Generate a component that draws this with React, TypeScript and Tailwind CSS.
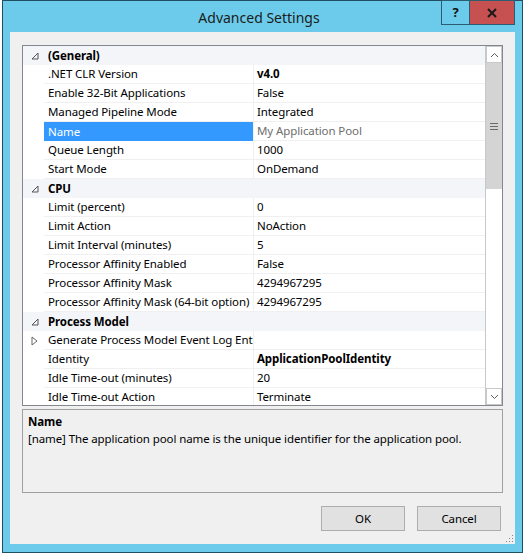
import React from "react";

type Row =
  | { kind: "cat"; label: string }
  | { kind: "prop"; label: string; value: string; bold?: boolean; selected?: boolean; expandable?: boolean };

const rows: Row[] = [
  { kind: "cat", label: "(General)" },
  { kind: "prop", label: ".NET CLR Version", value: "v4.0", bold: true },
  { kind: "prop", label: "Enable 32-Bit Applications", value: "False" },
  { kind: "prop", label: "Managed Pipeline Mode", value: "Integrated" },
  { kind: "prop", label: "Name", value: "My Application Pool", selected: true },
  { kind: "prop", label: "Queue Length", value: "1000" },
  { kind: "prop", label: "Start Mode", value: "OnDemand" },
  { kind: "cat", label: "CPU" },
  { kind: "prop", label: "Limit (percent)", value: "0" },
  { kind: "prop", label: "Limit Action", value: "NoAction" },
  { kind: "prop", label: "Limit Interval (minutes)", value: "5" },
  { kind: "prop", label: "Processor Affinity Enabled", value: "False" },
  { kind: "prop", label: "Processor Affinity Mask", value: "4294967295" },
  { kind: "prop", label: "Processor Affinity Mask (64-bit option)", value: "4294967295" },
  { kind: "cat", label: "Process Model" },
  { kind: "prop", label: "Generate Process Model Event Log Entry", value: "", expandable: true },
  { kind: "prop", label: "Identity", value: "ApplicationPoolIdentity", bold: true },
  { kind: "prop", label: "Idle Time-out (minutes)", value: "20" },
  { kind: "prop", label: "Idle Time-out Action", value: "Terminate" },
  { kind: "prop", label: "Load User Profile", value: "True" },
];

const ExpandedGlyph = () => (
  <svg width="8" height="8" viewBox="0 0 8 8">
    <path d="M7 1 L7 7 L1 7 Z" fill="none" stroke="#555" strokeWidth="1" />
  </svg>
);

const CollapsedGlyph = () => (
  <svg width="7" height="10" viewBox="0 0 7 10">
    <path d="M1 1 L6 5 L1 9 Z" fill="none" stroke="#666" strokeWidth="1" />
  </svg>
);

function GridRow({ row }: { row: Row }) {
  if (row.kind === "cat") {
    return (
      <div className="flex h-[19px] items-center bg-[#f4f5f8]">
        <div className="flex w-[21px] shrink-0 justify-center pl-[2px]">
          <ExpandedGlyph />
        </div>
        <div className="pl-[4px] font-bold">{row.label}</div>
      </div>
    );
  }
  return (
    <div className="flex h-[19px] items-stretch">
      <div className="flex w-[21px] shrink-0 items-center justify-center pl-[2px]">
        {row.expandable ? <CollapsedGlyph /> : null}
      </div>
      <div
        className={
          row.selected
            ? "flex w-[209px] shrink-0 items-center overflow-hidden whitespace-nowrap bg-[#3399ff] pl-[4px] text-white"
            : "flex w-[209px] shrink-0 items-center overflow-hidden whitespace-nowrap border-b border-[#f0f0f0] pl-[4px]"
        }
      >
        {row.label}
      </div>
      <div
        className={
          "flex flex-1 items-center overflow-hidden whitespace-nowrap border-b border-l border-[#f0f0f0] pl-[3px] " +
          (row.bold ? "font-bold " : "") +
          (row.selected ? "text-[#6d6d6d]" : "")
        }
      >
        {row.value}
      </div>
    </div>
  );
}

export default function App() {
  return (
    <div
      className="relative h-[555px] w-[525px] overflow-hidden bg-white text-[11.5px] tracking-[-0.1px] text-black"
      style={{ fontFamily: '"Segoe UI", "Noto Sans", "Open Sans", sans-serif' }}
    >
      <div className="ml-[2px] flex h-[553px] w-[521px] flex-col border border-[#1f4f63] bg-[#6ccbea]">
        {/* Title bar */}
        <div className="grid h-[31px] grid-cols-[1fr_auto_1fr] pr-[7px]">
          <div />
          <div className="self-center pt-[1px] text-[14px] tracking-normal text-[#1b1b1b]">Advanced Settings</div>
          <div className="flex items-start justify-end">
            <div className="-mt-px flex h-[25px] w-[29px] items-center justify-center border border-[#2a5d70] text-[13px] font-bold text-[#111]">
              ?
            </div>
            <div className="-mt-px -ml-px flex h-[25px] w-[46px] items-center justify-center border border-[#2a5d70] bg-[#c75050]">
              <svg width="10" height="10" viewBox="0 0 10 10">
                <path d="M1 1 L9 9 M9 1 L1 9" stroke="#1a1a1a" strokeWidth="2" />
              </svg>
            </div>
          </div>
        </div>

        {/* Client area */}
        <div className="mx-[7px] flex flex-1 flex-col bg-[#f0f0f0] pl-[12px] pr-[12px] pt-[13px]">
          {/* Property grid */}
          <div className="flex h-[361px] border border-[#828790] bg-white">
            <div className="flex-1 overflow-hidden">
              {rows.map((r, i) => (
                <GridRow key={i} row={r} />
              ))}
            </div>
            {/* Scrollbar */}
            <div className="flex w-[17px] flex-col border-l border-[#c8c8c8] bg-white">
              <div className="flex h-[17px] items-center justify-center border border-[#c8c8c8] bg-white">
                <svg width="9" height="6" viewBox="0 0 9 6">
                  <path d="M1 5 L4.5 1.5 L8 5" fill="none" stroke="#606060" strokeWidth="1" />
                </svg>
              </div>
              <div className="flex h-[126px] items-center justify-center bg-[#d4d4d4]">
                <svg width="8" height="7" viewBox="0 0 8 7">
                  <path d="M0 0.5 H8 M0 3.5 H8 M0 6.5 H8" stroke="#6a6a6a" strokeWidth="1" />
                </svg>
              </div>
              <div className="flex-1 bg-white" />
              <div className="flex h-[17px] items-center justify-center border border-[#c8c8c8] bg-white">
                <svg width="9" height="6" viewBox="0 0 9 6">
                  <path d="M1 1 L4.5 4.5 L8 1" fill="none" stroke="#606060" strokeWidth="1" />
                </svg>
              </div>
            </div>
          </div>

          {/* Description pane */}
          <div className="mt-[3px] h-[84px] border border-[#a0a0a0] bg-[#f0f0f0] px-[5px] pt-[3px]">
            <div className="font-bold leading-[17px]">Name</div>
            <div className="leading-[17px]">
              [name] The application pool name is the unique identifier for the application pool.
            </div>
          </div>

          {/* Buttons */}
          <div className="mt-[13px] flex justify-end gap-[12px] pr-[2px]">
            <div className="flex h-[25px] w-[84px] items-center justify-center border border-[#adadad] bg-[#e1e1e1]">
              OK
            </div>
            <div className="flex h-[25px] w-[84px] items-center justify-center border border-[#adadad] bg-[#e1e1e1]">
              Cancel
            </div>
          </div>
          <div className="flex flex-1 items-end justify-end pb-[1px]">
            <svg width="8" height="8" viewBox="0 0 8 8" className="-mr-[11px]">
              <rect x="6" y="0" width="1" height="1" fill="#888" />
              <rect x="3" y="3" width="1" height="1" fill="#888" />
              <rect x="6" y="3" width="1" height="1" fill="#888" />
              <rect x="0" y="6" width="1" height="1" fill="#888" />
              <rect x="3" y="6" width="1" height="1" fill="#888" />
              <rect x="6" y="6" width="1" height="1" fill="#888" />
            </svg>
          </div>
        </div>
        <div className="h-[8px]" />
      </div>
    </div>
  );
}
